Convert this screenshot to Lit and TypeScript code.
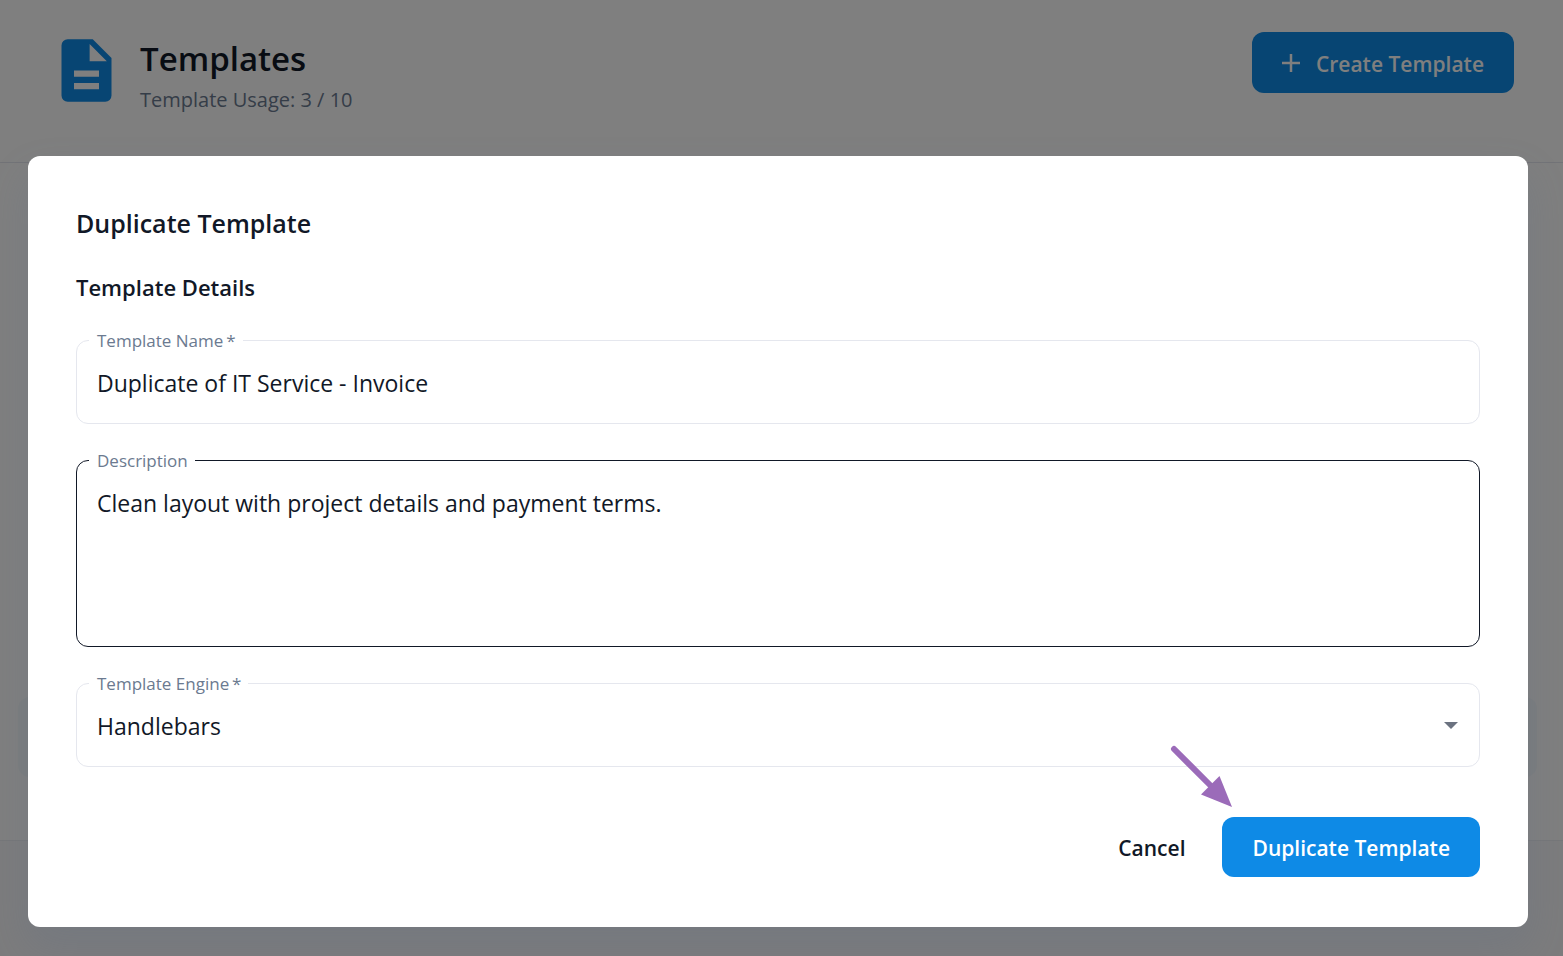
import { LitElement, html, css } from "lit";
import { customElement, state } from "lit/decorators.js";

@customElement("app-root")
export class AppRoot extends LitElement {
  @state() private name = "Duplicate of IT Service - Invoice";
  @state() private description = "Clean layout with project details and payment terms.";

  static styles = css`
    :host {
      display: block;
      position: relative;
      min-height: 100vh;
      overflow: hidden;
      background: #f8f9fb;
      color: #111827;
      font-family: "Segoe UI", "Open Sans", "Noto Sans", sans-serif;
    }
    * { box-sizing: border-box; }
    h1, h2, h3, p { margin: 0; }
    button, input, textarea, select { font: inherit; color: inherit; }
    svg { display: block; }

    .header {
      display: flex;
      align-items: flex-start;
      justify-content: space-between;
      height: 163px;
      padding: 32px 49px 0 49px;
      background: #fff;
      border-bottom: 1px solid #e5e7ee;
    }
    .brand { display: flex; gap: 16px; }
    .brand svg { width: 75px; height: 77px; fill: #0e8ae6; }
    .title { font-size: 33px; line-height: 54px; font-weight: 600; }
    .usage { font-size: 20px; line-height: 28px; color: #6b7a90; }

    .btn {
      display: flex;
      align-items: center;
      justify-content: center;
      height: 60px;
      padding: 2px 30px 0;
      border: 0;
      border-radius: 12px;
      background: none;
      font-size: 21px;
      line-height: 36px;
      font-weight: 600;
      white-space: nowrap;
    }
    .primary { background: #0e8ae6; color: #fff; }
    .create { gap: 16px; height: 61px; }
    .create svg { width: 18px; height: 18px; margin-bottom: 2px; }

    .content { height: 678px; padding: 534px 26px 0 18px; border-bottom: 1px solid #eceef2; background: #fefefe; }
    .panel { height: 80px; border-radius: 12px; background: #f7fafc; }

    .backdrop {
      position: absolute;
      inset: 0;
      padding: 156px 35px 29px 28px;
      background: rgba(0, 0, 0, 0.5);
    }
    .dialog {
      display: flex;
      flex-direction: column;
      padding: 48px 48px 50px;
      border-radius: 12px;
      background: #fff;
      box-shadow: 0 20px 40px rgba(90, 110, 140, 0.2);
    }
    .heading { font-size: 25px; line-height: 38px; font-weight: 600; }
    .subheading { margin-top: 27px; font-size: 22px; line-height: 36px; font-weight: 600; }
    .fields { display: flex; flex-direction: column; gap: 26px; margin-top: 25px; }
    .field {
      min-width: 0;
      margin: 0;
      padding: 0 12px;
      border: 1px solid #e5e7ee;
      border-radius: 12px;
    }
    .hover { border-color: #111827; }
    legend { padding: 0 7px 0 8px; font-size: 17px; line-height: 21px; color: #6b7a90; }
    legend label { display: block; }
    .control {
      display: block;
      width: 100%;
      height: 72px;
      margin: 0;
      padding: 14px 8px 22px;
      border: 0;
      outline: 0;
      background: transparent;
      font-size: 23px;
      line-height: 36px;
      appearance: none;
      resize: none;
    }
    .area { height: 175px; }
    .picker { display: grid; align-items: center; }
    .picker > * { grid-area: 1 / 1; }
    .picker svg { justify-self: end; width: 16px; height: 8px; margin: 0 8px 8px 0; fill: #6b7280; pointer-events: none; }

    .actions { display: flex; justify-content: flex-end; gap: 7px; margin-top: 50px; }
    .arrow { position: absolute; right: 328px; top: 743px; width: 66px; height: 66px; pointer-events: none; }
  `;

  render() {
    return html`
      <header class="header">
        <div class="brand">
          <svg viewBox="0 0 24 24" aria-hidden="true">
            <path d="M6 2a2 2 0 0 0-2 2v16a2 2 0 0 0 2 2h12a2 2 0 0 0 2-2V8l-6-6H6Zm7 1.5L18.5 9H13V3.500ZM8 12h8v2H8v-2Zm0 4h8v2H8v-2Z" />
          </svg>
          <div>
            <h1 class="title">Templates</h1>
            <p class="usage">Template Usage: 3 / 10</p>
          </div>
        </div>
        <button class="btn primary create" type="button">
          <svg viewBox="0 0 18 18" aria-hidden="true"><path d="M9 0v18M0 9h18" stroke="currentColor" stroke-width="2.500" /></svg>
          Create Template
        </button>
      </header>
      <main class="content"><div class="panel"></div></main>
      <div class="backdrop">
        <form class="dialog" role="dialog" aria-labelledby="heading">
          <h2 class="heading" id="heading">Duplicate Template</h2>
          <h3 class="subheading">Template Details</h3>
          <div class="fields">
            <fieldset class="field">
              <legend><label for="name">Template Name&thinsp;*</label></legend>
              <input class="control" id="name" type="text" required .value=${this.name}
                @input=${(e: Event) => (this.name = (e.target as HTMLInputElement).value)} />
            </fieldset>
            <fieldset class="field hover">
              <legend><label for="description">Description</label></legend>
              <textarea class="control area" id="description" .value=${this.description}
                @input=${(e: Event) => (this.description = (e.target as HTMLTextAreaElement).value)}></textarea>
            </fieldset>
            <fieldset class="field">
              <legend><label for="engine">Template Engine&thinsp;*</label></legend>
              <div class="picker">
                <select class="control" id="engine" required><option>Handlebars</option></select>
                <svg viewBox="0 0 16 8" aria-hidden="true"><path d="M1 0h14L8 7Z" /></svg>
              </div>
            </fieldset>
          </div>
          <div class="actions">
            <button class="btn" type="button">Cancel</button>
            <button class="btn primary" type="button">Duplicate Template</button>
          </div>
        </form>
        <svg class="arrow" viewBox="0 0 66 66" aria-hidden="true">
          <path d="M5 6 43 44" stroke="#9b6bb9" stroke-width="6" stroke-linecap="round" />
          <path d="M63 64 50.500 33 32 51.500Z" fill="#9b6bb9" />
        </svg>
      </div>
    `;
  }
}
